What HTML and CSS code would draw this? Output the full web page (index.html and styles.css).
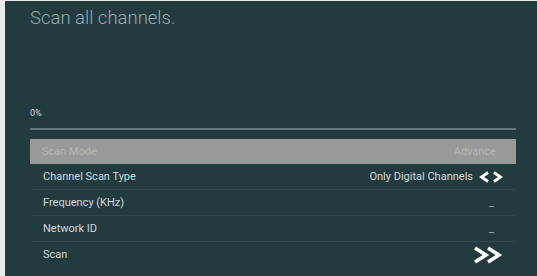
FILE: index.html
```html
<!DOCTYPE html>
<html lang="en">
<head>
    <meta charset="UTF-8">
    <meta name="viewport" content="width=device-width, initial-scale=1.0">
    <title>Channel Scan</title>
    <link rel="stylesheet" href="styles.css">
</head>
<body>
    <div class="panel">
        <div class="title">Scan all channels.</div>

        <div class="percent">0%</div>
        <div class="progress"></div>

        <div class="list">
            <div class="row active">
                <span class="label">Scan Mode</span>
                <span class="value">Advance</span>
            </div>
            <div class="row">
                <span class="label">Channel Scan Type</span>
                <span class="value">Only Digital Channels
                    <svg class="lr" width="24" height="12" viewBox="0 0 24 12">
                        <path d="M9 1.5 L2.5 6 L9 10.5"/>
                        <path d="M15 1.5 L21.5 6 L15 10.5"/>
                    </svg>
                </span>
            </div>
            <div class="row">
                <span class="label">Frequency (KHz)</span>
                <span class="value dash">_</span>
            </div>
            <div class="row">
                <span class="label">Network ID</span>
                <span class="value dash">_</span>
            </div>
            <div class="row last">
                <span class="label">Scan</span>
                <span class="value">
                    <svg class="go" width="31" height="18" viewBox="0 0 31 18">
                        <path d="M3 2 L14 9 L3 16"/>
                        <path d="M16 2 L27 9 L16 16"/>
                    </svg>
                </span>
            </div>
        </div>
    </div>
</body>
</html>
```

FILE: styles.css
```css
body {
    margin: 0;
    background-color: #e9eded;
    font-family: Roboto, "Liberation Sans", sans-serif;
}
.panel {
    margin: 1px 0 0 5px;
    height: 275px;
    box-sizing: border-box;
    background-color: #223b3f; /* dark teal */
    padding: 6px 21px 0 25px;
}
.title {
    font-size: 18.5px;
    font-weight: 300;
    line-height: 23px;
    color: #9aaaac;
}
.percent {
    margin-top: 76px;
    font-size: 9px;
    line-height: 14px;
    color: #d3d9da;
}
.progress {
    margin-top: 8px;
    height: 2px;
    background-color: #5f777b;
}
.list {
    margin-top: 9px;
}
.row {
    display: flex;
    align-items: center;
    justify-content: space-between;
    height: 25px;
    margin: 0 1px 0 2px;
    padding: 0 12px 0 11px;
    border-bottom: 1px solid #2f484c;
    font-size: 11px;
    color: #d3d9da;
}
.row.active {
    margin: 0;
    padding: 0 20px 0 12px;
    border-bottom: none;
    background-color: #979a99;
    color: #b4b7b6;
}
.row.last {
    border-bottom: none;
}
.value {
    display: flex;
    align-items: center;
    gap: 6px;
}
.value.dash {
    color: #aab3b4;
    margin-right: 9px;
}
.lr path {
    fill: none;
    stroke: #ffffff;
    stroke-width: 2.8;
}
.go path {
    fill: none;
    stroke: #ffffff;
    stroke-width: 3.6;
}
```
